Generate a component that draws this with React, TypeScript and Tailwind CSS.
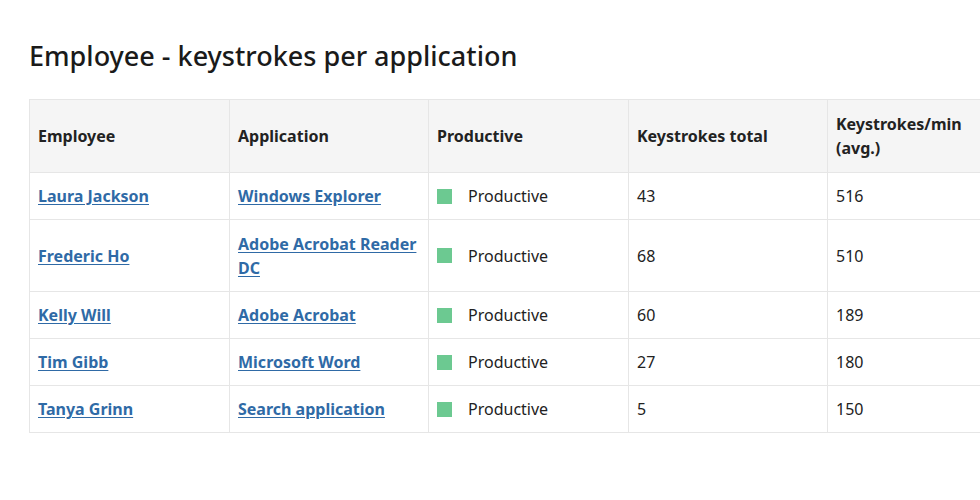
const rows = [
  { emp: "Laura Jackson", app: "Windows Explorer", total: "43", avg: "516", h: "h-[47px]" },
  { emp: "Frederic Ho", app: "Adobe Acrobat Reader DC", total: "68", avg: "510", h: "h-[72px]" },
  { emp: "Kelly Will", app: "Adobe Acrobat", total: "60", avg: "189", h: "h-[47px]" },
  { emp: "Tim Gibb", app: "Microsoft Word", total: "27", avg: "180", h: "h-[47px]" },
  { emp: "Tanya Grinn", app: "Search application", total: "5", avg: "150", h: "h-[47px]" },
]

const cell = "border border-[#e6e6e6] px-2 align-middle"
const link = "font-bold text-[#2f6aa6] underline underline-offset-2 leading-6"

export default function App() {
  return (
    <div className="w-[980px] h-[500px] overflow-hidden bg-white text-[#222] font-['Open_Sans',sans-serif]">
      <h1 className="pl-[29px] pt-[38px] text-[27px] leading-[36px] font-medium text-[#1a1a1a]">Employee - keystrokes per application</h1>
      <div className="pl-[29px] mt-[25px]">
        <table className="border-collapse table-fixed w-[1000px] text-[16px]">
          <colgroup>
            <col className="w-[200px]" />
            <col className="w-[199px]" />
            <col className="w-[200px]" />
            <col className="w-[199px]" />
            <col className="w-[202px]" />
          </colgroup>
          <thead>
            <tr className="h-[73px] bg-[#f5f5f5] text-left">
              <th className={cell + " font-bold"}>Employee</th>
              <th className={cell + " font-bold"}>Application</th>
              <th className={cell + " font-bold"}>Productive</th>
              <th className={cell + " font-bold"}>Keystrokes total</th>
              <th className={cell + " font-bold leading-6"}>Keystrokes/min<br />(avg.)</th>
            </tr>
          </thead>
          <tbody>
            {rows.map((r) => (
              <tr key={r.emp} className={r.h}>
                <td className={cell}><a href="#" className={link}>{r.emp}</a></td>
                <td className={cell}><a href="#" className={link}>{r.app}</a></td>
                <td className={cell}>
                  <div className="flex items-center gap-4">
                    <span className="w-[15px] h-[15px] bg-[#6cc991]" />
                    <span>Productive</span>
                  </div>
                </td>
                <td className={cell}>{r.total}</td>
                <td className={cell}>{r.avg}</td>
              </tr>
            ))}
          </tbody>
        </table>
      </div>
    </div>
  )
}
